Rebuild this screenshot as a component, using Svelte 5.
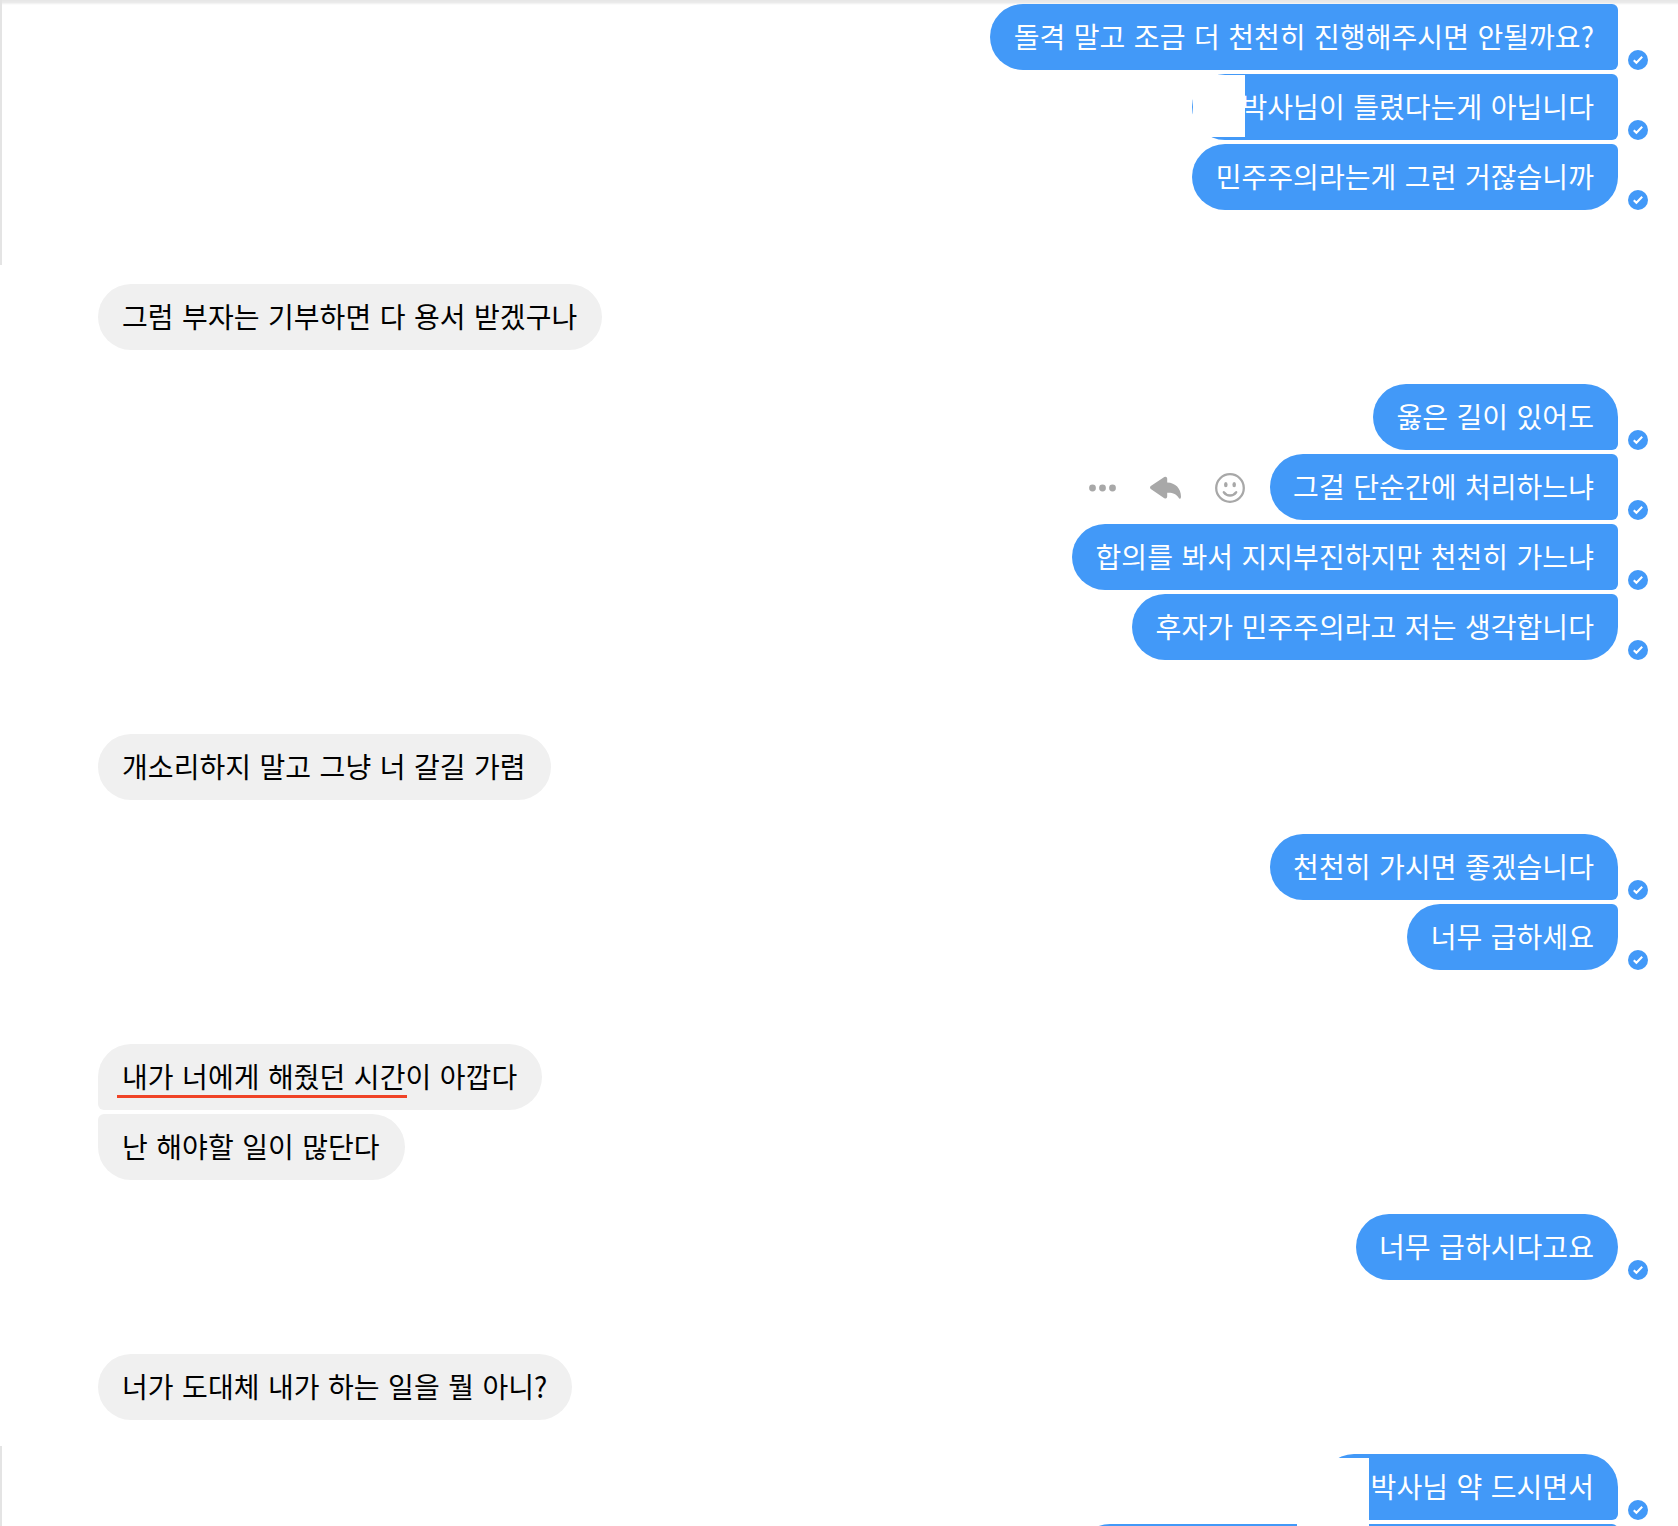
<script>
  const thread = [
    {
      mine: true,
      messages: [
        { text: '돌격 말고 조금 더 천천히 진행해주시면 안될까요?', above: true },
        { text: '박사님이 틀렸다는게 아닙니다', redacted: 'name' },
        { text: '민주주의라는게 그런 거잖습니까' }
      ]
    },
    { mine: false, messages: [{ text: '그럼 부자는 기부하면 다 용서 받겠구나' }] },
    {
      mine: true,
      messages: [
        { text: '옳은 길이 있어도' },
        { text: '그걸 단순간에 처리하느냐', hovered: true },
        { text: '합의를 봐서 지지부진하지만 천천히 가느냐' },
        { text: '후자가 민주주의라고 저는 생각합니다' }
      ]
    },
    { mine: false, messages: [{ text: '개소리하지 말고 그냥 너 갈길 가렴' }] },
    { mine: true, messages: [{ text: '천천히 가시면 좋겠습니다' }, { text: '너무 급하세요' }] },
    {
      mine: false,
      messages: [{ text: '내가 너에게 해줬던 시간이 아깝다', marked: true }, { text: '난 해야할 일이 많단다' }]
    },
    { mine: true, messages: [{ text: '너무 급하시다고요' }] },
    { mine: false, messages: [{ text: '너가 도대체 내가 하는 일을 뭘 아니?' }] },
    { mine: true, messages: [{ text: '박사님 약 드시면서', redacted: 'tall' }, { text: '', cut: true }] }
  ];
</script>

<main class="chat">
  <div class="shadow"></div>
  <div class="edge edge-top"></div>
  <div class="edge edge-bottom"></div>

  {#each thread as group}
    <section class="group" class:mine={group.mine}>
      {#each group.messages as msg, i}
        <div class="row">
          {#if msg.hovered}
            <div class="actions">
              <svg width="28" height="8" viewBox="0 0 28 8">
                <circle cx="3.5" cy="4" r="3.4" />
                <circle cx="13.5" cy="4" r="3.4" />
                <circle cx="23.5" cy="4" r="3.4" />
              </svg>
              <svg class="reply" width="32" height="24" viewBox="0 0 32 24">
                <path d="M.8 10.1 14.3.9Q17 0 17.2 2.6V6.4C25.5 6.6 31 12.4 31 20.7Q30.8 24.2 28.8 22C26.6 17.8 22.5 16.4 17.2 16.7V20.6Q17 23.4 14.3 22.2L.8 12.9Q-.8 11.5.8 10.1Z" />
              </svg>
              <svg width="30" height="30" viewBox="0 0 30 30">
                <circle class="line" cx="15" cy="15" r="13.8" />
                <ellipse cx="10.8" cy="11.7" rx="1.8" ry="2.6" />
                <ellipse cx="19.2" cy="11.7" rx="1.8" ry="2.6" />
                <path class="line" d="M8.8 19.2C12 23.6 18 23.6 21.2 19.2" />
              </svg>
            </div>
          {/if}
          <div
            class="bubble {msg.redacted ?? ''}"
            class:joined-top={i > 0 || msg.above}
            class:joined-bottom={i < group.messages.length - 1}
            class:cut={msg.cut}
          >
            {msg.text}
            {#if msg.redacted}<span class="mask"></span>{/if}
            {#if msg.marked}<span class="mark"></span>{/if}
          </div>
          {#if group.mine}
            <svg class="seen" width="20" height="20" viewBox="0 0 20 20">
              <circle cx="10" cy="10" r="10" />
              <path d="M5.8 10.2 8.4 12.8 14.2 6.8" />
            </svg>
          {/if}
        </div>
      {/each}
    </section>
  {/each}
</main>

<style>
  :global(body) {
    margin: 0;
    background: #fff;
  }

  .chat {
    position: relative;
    box-sizing: border-box;
    width: 1678px;
    height: 1526px;
    padding: 4px 30px 0 98px;
    overflow: hidden;
    background: #fff;
    font-family: 'Noto Sans CJK KR', sans-serif;
    font-size: 28px;
    line-height: 64px;
    letter-spacing: 0.06px;
    word-spacing: 2.1px;
    color: #000;
  }

  .shadow {
    position: absolute;
    top: 0;
    left: 0;
    right: 0;
    height: 5px;
    background: linear-gradient(#e6e6e6, #ebebeb 50%, #fff);
  }

  .edge {
    position: absolute;
    left: 0;
    width: 2px;
    background: #e4e4e4;
  }

  .edge-top {
    top: 0;
    height: 265px;
  }

  .edge-bottom {
    top: 1446px;
    height: 80px;
  }

  .group {
    display: flex;
    flex-direction: column;
    gap: 4px;
    margin-bottom: 34px;
  }

  .group.mine {
    margin-bottom: 74px;
  }

  .row {
    display: flex;
    align-items: flex-end;
  }

  .mine .row {
    justify-content: flex-end;
  }

  .bubble {
    position: relative;
    height: 66px;
    padding: 0 25px 0 24px;
    border-radius: 33px;
    background: #f0f0f0;
    white-space: nowrap;
  }

  .bubble.joined-top {
    border-top-left-radius: 6px;
  }

  .bubble.joined-bottom {
    border-bottom-left-radius: 6px;
  }

  .mine .bubble {
    padding: 0 24px 0 23.4px;
    border-radius: 33px;
    background: #4299f8;
    color: #fff;
  }

  .mine .bubble.joined-top {
    border-top-right-radius: 6px;
  }

  .mine .bubble.joined-bottom {
    border-bottom-right-radius: 6px;
  }

  .mine .bubble.name,
  .mine .bubble.tall {
    padding-left: 49.2px;
  }

  .mine .bubble.cut {
    width: 493.6px;
  }

  .mask {
    position: absolute;
    background: #fff;
  }

  .name .mask {
    top: 1px;
    right: 373px;
    width: 52px;
    height: 62px;
  }

  /* runs on over the bubble below */
  .tall .mask {
    z-index: 1;
    top: 4px;
    right: 249px;
    width: 72px;
    height: 70px;
  }

  .mark {
    position: absolute;
    left: 19px;
    top: 51px;
    width: 290px;
    height: 3px;
    background: #f04326;
  }

  .seen {
    flex: none;
    margin-left: 10px;
    fill: #4299f8;
  }

  .seen path {
    fill: none;
    stroke: #fff;
    stroke-width: 2.1;
  }

  .actions {
    display: flex;
    align-items: center;
    gap: 33px;
    height: 66px;
    margin-right: 24.6px;
    padding-top: 1px;
    box-sizing: border-box;
    fill: #a8a8a8;
  }

  .actions .line {
    fill: none;
    stroke: #a8a8a8;
    stroke-width: 2.3;
    stroke-linecap: round;
  }
</style>
